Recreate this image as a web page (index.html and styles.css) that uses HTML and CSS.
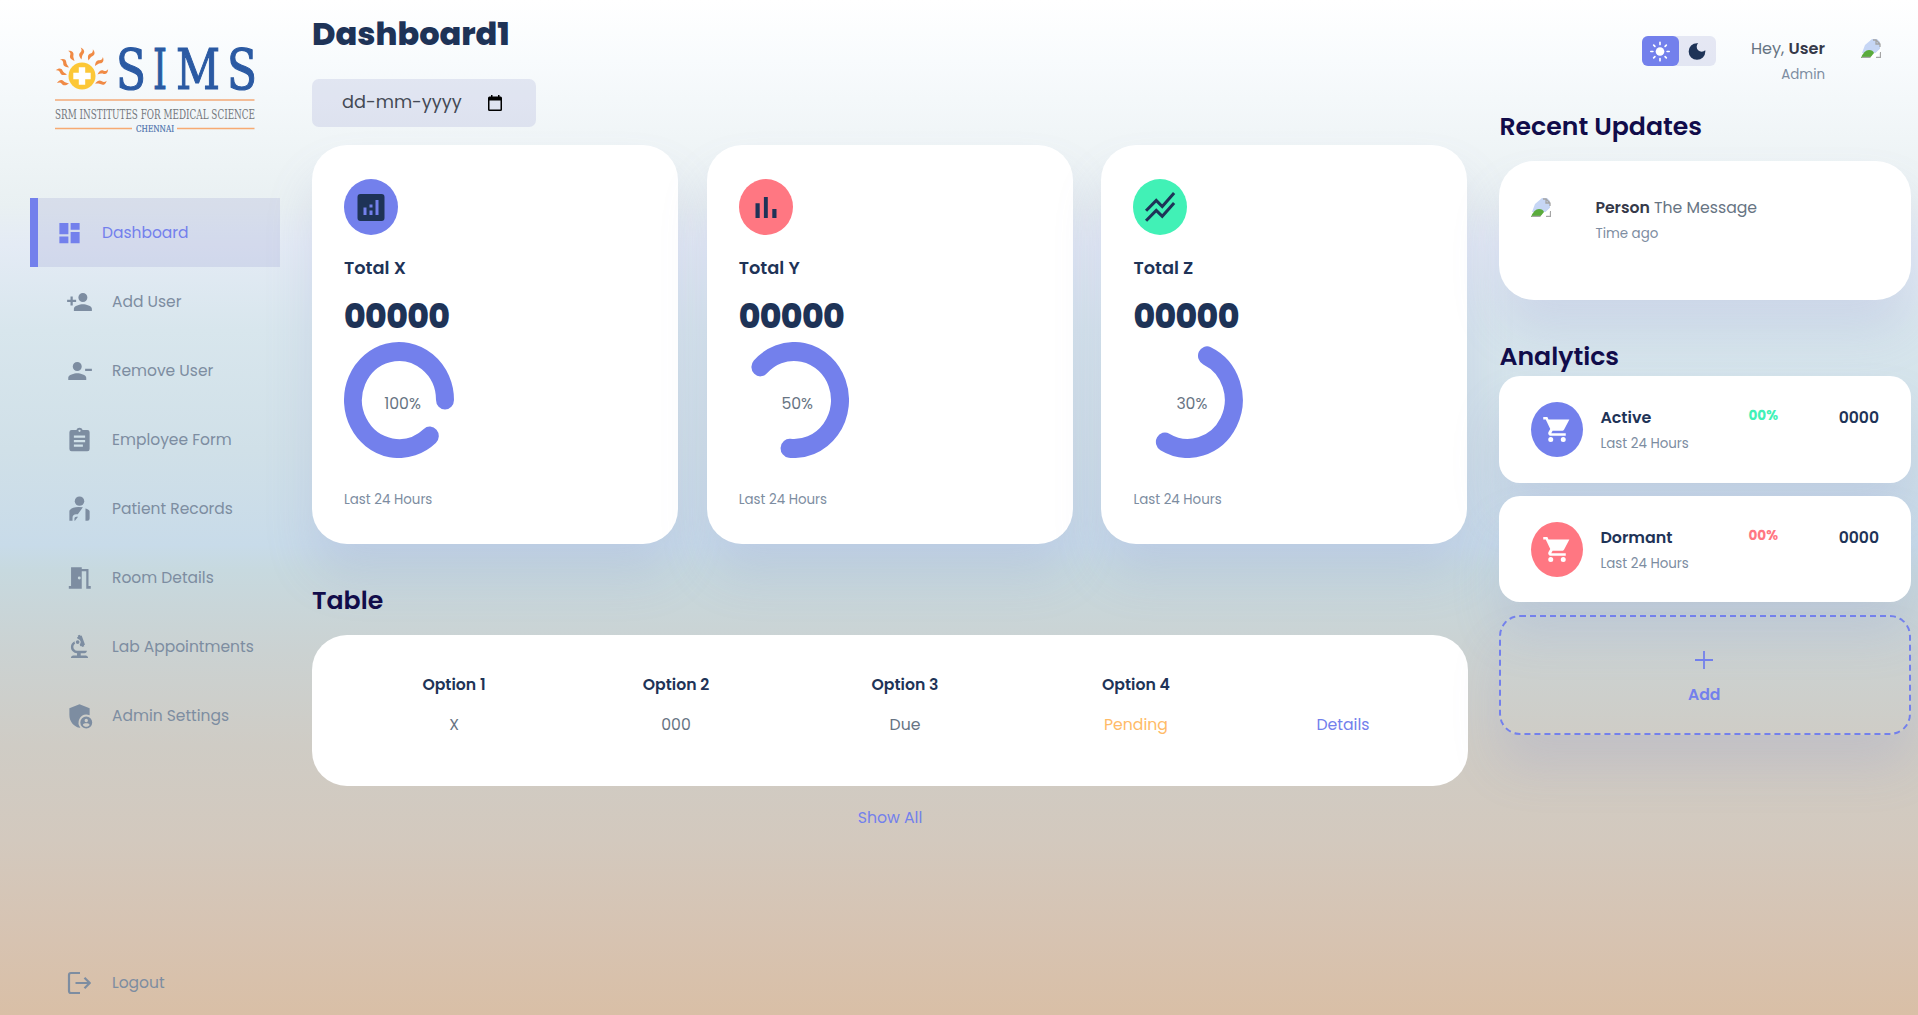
FILE: index.html
```html
<!DOCTYPE html>
<html lang="en">
<head>
<meta charset="utf-8">
<title>Dashboard</title>
<link rel="stylesheet" href="styles.css">
</head>
<body>
<div class="container">
  <aside>
    <svg class="logo" viewBox="0 0 200 90" role="img" aria-label="SIMS">
      <defs><path id="ray" d="M0 0C-3-3.500-2.800-5.500-1-7.200C.4-8.600.4-10-.8-12C3-10.200 3.400-7.500 1.900-5.800C.4-4.200.6-2.500 0 0Z"/></defs>
      <g fill="#f08a45">
        <use href="#ray" transform="translate(26.500 13.500)"/>
        <use href="#ray" transform="translate(19.500 15) rotate(-28)"/>
        <use href="#ray" transform="translate(14 21.500) rotate(-45)"/>
        <use href="#ray" transform="translate(12 28.500) rotate(-66)"/>
        <use href="#ray" transform="translate(14 37.500) rotate(-84)"/>
        <use href="#ray" transform="translate(33.500 14.500) rotate(25)"/>
        <use href="#ray" transform="translate(40 20) rotate(45)"/>
        <use href="#ray" transform="translate(42.500 28.500) rotate(66)"/>
        <use href="#ray" transform="translate(40 37.500) rotate(80)"/>
      </g>
      <circle cx="27" cy="30" r="13.500" fill="#fcc737"/>
      <path d="M23.800 21.300h6.400v5.500h5.500v6.400h-5.500v5.500h-6.400v-5.500h-5.500v-6.400h5.500z" fill="#fff"/>
      <g class="logo-name">
        <text x="61" y="43" textLength="30" lengthAdjust="spacingAndGlyphs">S</text>
        <text x="98" y="43" textLength="14" lengthAdjust="spacingAndGlyphs">I</text>
        <text x="121" y="43" textLength="44" lengthAdjust="spacingAndGlyphs">M</text>
        <text x="172" y="43" textLength="30" lengthAdjust="spacingAndGlyphs">S</text>
      </g>
      <path d="M0 54H199.500" stroke="#f3bd98" stroke-width="2"/>
      <text class="logo-line" x="0" y="73" textLength="200" lengthAdjust="spacingAndGlyphs">SRM INSTITUTES FOR MEDICAL SCIENCE</text>
      <path d="M0 82.500H77M122 82.500H199.500" stroke="#f7aa72" stroke-width="1.600"/>
      <text class="logo-city" x="81" y="86" textLength="38" lengthAdjust="spacingAndGlyphs">CHENNAI</text>
    </svg>
    <nav>
      <a class="active"><svg viewBox="0 0 24 24"><path d="M3 13h8V3H3zm0 8h8v-6H3zm10 0h8V11h-8zm0-18v6h8V3z"/></svg><span>Dashboard</span></a>
      <a><svg viewBox="0 0 24 24"><path d="M15 12a4 4 0 1 0 0-8 4 4 0 0 0 0 8zm-9-2V7H4v3H1v2h3v3h2v-3h3v-2zm9 4c-2.670 0-8 1.340-8 4v2h16v-2c0-2.660-5.330-4-8-4z"/></svg><span>Add User</span></a>
      <a><svg viewBox="0 0 24 24"><path d="M10 12a4 4 0 1 0 0-8 4 4 0 0 0 0 8zm7-2v2h6v-2zM2 18v2h16v-2c0-2.660-5.330-4-8-4s-8 1.340-8 4z"/></svg><span>Remove User</span></a>
      <a><svg viewBox="0 0 24 24"><path fill-rule="evenodd" d="M19 3h-4.200a3 3 0 0 0-5.600 0H5a2 2 0 0 0-2 2v15a2 2 0 0 0 2 2h14a2 2 0 0 0 2-2V5a2 2 0 0 0-2-2zm-7-.2a1 1 0 1 1 0 2 1 1 0 0 1 0-2zM15 18H7v-2h8zm2-4H7v-2h10zm0-4H7V8h10z"/></svg><span>Employee Form</span></a>
      <a><svg viewBox="0 0 24 24"><circle cx="12" cy="5" r="4.200"/><path d="M3 22.500v-8.500c0-2 4-3.700 8-3.700l4 .2-4.500 6.200H9c-2 0-3.200 1.300-3.200 3v2.800zM7.500 22.500v-2c0-1 .7-1.700 1.700-1.700h1.500L8 22.500zM17.300 11.500c2 .5 3.700 1.500 3.700 2.500v6.500a2 2 0 0 1-2 2h-1.700z"/></svg><span>Patient Records</span></a>
      <a><svg viewBox="0 0 24 24"><path fill-rule="evenodd" d="M14 2.500v19H2.500v-2.300H4.500V2.500zm-3.500 9.500a1.300 1.300 0 1 0 2.600 0 1.300 1.300 0 0 0-2.600 0zM14 4h6v15.200h2v2.300h-4V6h-4z"/></svg><span>Room Details</span></a>
      <a><svg viewBox="1 1 22 22"><path d="M7 19c-1.100 0-2 .9-2 2h14c0-1.100-.9-2-2-2h-4v-2h3c1.100 0 2-.9 2-2h-8c-1.660 0-3-1.340-3-3 0-1.090.59-2.040 1.460-2.560C8.170 9.030 8 8.540 8 8c0-.21.04-.42.09-.62C6.280 8.130 5 9.920 5 12c0 2.760 2.240 5 5 5v2z"/><path d="M10.560 5.510C11.910 5.540 13 6.640 13 8c0 .75-.33 1.410-.85 1.870l.59 1.620.94-.34.34.94 1.880-.68-.34-.94.94-.34-2.740-7.520-.94.34-.34-.94-1.880.68.34.94-.94.350z"/><circle cx="10.500" cy="8" r="1.500"/></svg><span>Lab Appointments</span></a>
      <a><svg viewBox="0 0 24 24"><path fill-rule="evenodd" d="M12 1.500 3 5v6c0 5.500 3.500 10 9 11.500l.8-.3A7 7 0 0 1 18 10.700c1 0 2 .2 3 .6V5zM18 12.500a5.300 5.300 0 1 0 0 10.600 5.300 5.300 0 0 0 0-10.600zm0 2a1.500 1.500 0 1 1 0 3 1.500 1.500 0 0 1 0-3zm0 7c-1.300 0-2.400-.6-3-1.600.2-1 2-1.400 3-1.400s2.800.4 3 1.400c-.6 1-1.700 1.600-3 1.600z"/></svg><span>Admin Settings</span></a>
      <a class="logout"><svg viewBox="0 0 24 24"><g fill="none" stroke="currentColor" stroke-width="2.200"><path d="M13 2H4a2 2 0 0 0-2 2v16a2 2 0 0 0 2 2h9M8.500 12H22M17.500 6.800 22.700 12l-5.200 5.200"/></g></svg><span>Logout</span></a>
    </nav>
  </aside>

  <main>
    <h1>Dashboard1</h1>
    <div class="date"><span>dd-mm-yyyy</span>
      <svg viewBox="0 0 14 16"><path fill-rule="evenodd" d="M3 0v1.500H1.500A1.500 1.500 0 0 0 0 3v11.500A1.500 1.500 0 0 0 1.500 16h11a1.500 1.500 0 0 0 1.500-1.500V3a1.500 1.500 0 0 0-1.500-1.500H11.500V0H10v1.500H4.500V0zM1.500 5.500h11v9h-11z"/></svg>
    </div>
    <div class="insights">
      <section class="card">
        <i class="badge primary"><svg viewBox="0 0 24 24"><path fill-rule="evenodd" d="M19 3H5a2 2 0 0 0-2 2v14a2 2 0 0 0 2 2h14a2 2 0 0 0 2-2V5a2 2 0 0 0-2-2zM9 17H7v-5h2zm4 0h-2v-3h2zm0-5h-2v-2h2zm4 5h-2V7h2z"/></svg></i>
        <h3>Total X</h3>
        <div class="total">00000</div>
        <div class="progress"><svg viewBox="0 0 110 110" preserveAspectRatio="none"><path d="M85.800 89.200A46 46 0 1 1 101 55"/></svg><p>100%</p></div>
        <small>Last 24 Hours</small>
      </section>
      <section class="card">
        <i class="badge danger"><svg viewBox="0 0 24 24"><path d="M5 9.200h2.800V19H5zM10.600 5h2.600v14h-2.600zM16.200 13H19v6h-2.800z"/></svg></i>
        <h3>Total Y</h3>
        <div class="total">00000</div>
        <div class="progress"><svg viewBox="0 0 110 110" preserveAspectRatio="none"><path d="M21.400 23.600A46 46 0 1 1 50.600 100.800"/></svg><p>50%</p></div>
        <small>Last 24 Hours</small>
      </section>
      <section class="card">
        <i class="badge success"><svg viewBox="0 0 24 24"><g fill="none" stroke="currentColor" stroke-width="2"><path d="m2.700 14.200 6.800-6.900 4 4 7.900-8.900M2.700 20.800l6.800-6.900 4 4 7.900-8.900"/></g></svg></i>
        <h3>Total Z</h3>
        <div class="total">00000</div>
        <div class="progress"><svg viewBox="0 0 110 110" preserveAspectRatio="none"><path d="M74 13.100A46 46 0 1 1 31.900 94.800"/></svg><p>30%</p></div>
        <small>Last 24 Hours</small>
      </section>
    </div>
    <h2>Table</h2>
    <div class="table">
      <b>Option 1</b><b>Option 2</b><b>Option 3</b><b>Option 4</b><b></b>
      <span>X</span><span>000</span><span>Due</span><span class="warning">Pending</span><span class="link">Details</span>
    </div>
    <a class="show-all">Show All</a>
  </main>

  <div class="right">
    <div class="top">
      <div class="toggle">
        <span class="on"><svg viewBox="0 0 24 24"><circle cx="12" cy="12" r="5.200"/><g stroke="currentColor" stroke-width="2" stroke-linecap="round"><path d="M12 1v2.500M12 20.500V23M1 12h2.500M20.500 12H23M4.400 4.400l1.500 1.500M18.100 18.100l1.500 1.500M4.400 19.600l1.500-1.500M18.100 5.900l1.500-1.500"/></g></svg></span>
        <span><svg viewBox="0 0 24 24"><path d="M12 2a10 10 0 1 0 10 10c0-.5 0-.9-.1-1.400A6 6 0 1 1 13.400 2.100 9 9 0 0 0 12 2z"/></svg></span>
      </div>
      <div class="info"><p>Hey, <b>User</b></p><small>Admin</small></div>
      <svg class="broken" viewBox="0 0 20 20"><path d="M4 7l7-6h5l3 3v7l-4 4H1z" fill="#c6d6f5"/><path d="M0 20q3-8 8-8 4 0 5 3l-4 5z" fill="#5aab3c"/><path d="M12 2h3l4 4v3M15 2v4h4M1 19.500h9M15 19.500h4.500V14" fill="none" stroke="#a5a5a5" stroke-width="1.300"/><path d="M9 20 20 10v3l-6 7z" fill="#fff"/></svg>
    </div>
    <h2>Recent Updates</h2>
    <div class="updates">
      <svg class="broken" viewBox="0 0 20 20"><path d="M4 7l7-6h5l3 3v7l-4 4H1z" fill="#c6d6f5"/><path d="M0 20q3-8 8-8 4 0 5 3l-4 5z" fill="#5aab3c"/><path d="M12 2h3l4 4v3M15 2v4h4M1 19.500h9M15 19.500h4.500V14" fill="none" stroke="#a5a5a5" stroke-width="1.300"/><path d="M9 20 20 10v3l-6 7z" fill="#fff"/></svg>
      <div><p><b>Person</b> The Message</p><small>Time ago</small></div>
    </div>
    <h2 class="analytics">Analytics</h2>
    <div class="item">
      <i class="badge primary"><svg viewBox="0 0 24 24"><path d="M7 18a2 2 0 1 0 0 4 2 2 0 0 0 0-4zM1 2v2h2l3.600 7.600L5.200 14c-.7 1.300.3 3 1.800 3h12v-2H7.400l1.100-2h7.500c.7 0 1.400-.4 1.700-1L21.900 4H5.200l-.9-2zm16 16a2 2 0 1 0 0 4 2 2 0 0 0 0-4z"/></svg></i>
      <div class="name"><h3>Active</h3><small>Last 24 Hours</small></div>
      <h5 class="up">00%</h5><h3 class="count">0000</h3>
    </div>
    <div class="item">
      <i class="badge danger"><svg viewBox="0 0 24 24"><path d="M7 18a2 2 0 1 0 0 4 2 2 0 0 0 0-4zM1 2v2h2l3.600 7.600L5.200 14c-.7 1.300.3 3 1.800 3h12v-2H7.400l1.100-2h7.500c.7 0 1.400-.4 1.700-1L21.900 4H5.200l-.9-2zm16 16a2 2 0 1 0 0 4 2 2 0 0 0 0-4z"/></svg></i>
      <div class="name"><h3>Dormant</h3><small>Last 24 Hours</small></div>
      <h5 class="down">00%</h5><h3 class="count">0000</h3>
    </div>
    <div class="add"><svg viewBox="0 0 20 20"><path d="M10 0v20M0 10h20" stroke="currentColor" stroke-width="2"/></svg><b>Add</b></div>
  </div>
</div>
</body>
</html>
```
FILE: styles.css
```css
* { margin: 0; padding: 0; box-sizing: border-box; }

:root {
  --primary: #7380ec;
  --danger: #ff7782;
  --success: #41f1b6;
  --warning: #ffbb67;
  --dark: #1e3357;
  --muted: #7d8da1;
  --text: #677483;
  --shadow: 0 32px 48px rgba(132, 139, 200, 0.18);
}

body {
  width: 100%;
  height: 1015px;
  overflow: hidden;
  font-family: Poppins, Inter, "Liberation Sans", sans-serif;
  font-size: 15.700px;
  line-height: 20px;
  color: var(--text);
  background: linear-gradient(#fff 0, #f8fbfd 60px, #e9f0f2 205px, #e4ebf5 245px, #d8e6ed 330px, #d0e0e8 450px, #c8dbe9 545px, #c7d9df 570px, #cbd2d2 650px, #cfccc5 745px, #d3c9be 840px, #d7c3b1 940px, #d9bfa6 1015px);
}

svg { fill: currentColor; display: block; }
i { font-style: normal; }

.container {
  display: grid;
  grid-template-columns: 250px 1156px 411px;
  column-gap: 32px;
  padding-left: 30px;
  height: 1015px;
}

/* Sidebar */
aside { display: flex; flex-direction: column; }
.logo { width: 200px; height: 90px; margin: 46px 0 62px 25px; overflow: visible; }
.logo-name { font: 56px "DejaVu Serif", serif; fill: #2b5aa3; stroke: #2b5aa3; stroke-width: 1.200; }
.logo-line { font: 12px "DejaVu Serif", serif; fill: #74777c; }
.logo-city { font: 9px "DejaVu Serif", serif; fill: #4a70ab; stroke: #4a70ab; stroke-width: .2; }
nav { display: flex; flex-direction: column; flex: 1; }
nav a { display: flex; align-items: center; gap: 19px; height: 69px; padding-left: 36px; font-size: 15.500px; color: var(--muted); }
nav a span { padding-top: 1px; }
nav a svg { width: 27px; height: 28px; }
nav a.active { padding-left: 18px; color: var(--primary); background: rgba(132, 139, 200, 0.18); border-left: 8px solid var(--primary); }
nav a.logout { margin-top: auto; margin-bottom: -2px; }
nav a.logout svg { width: 24px; height: 24px; margin: 0 2px 0 1px; }

/* Main column */
main { display: flex; flex-direction: column; }
h1 { font-size: 32px; font-weight: 800; line-height: 40px; color: var(--dark); margin-top: 14px; }
h2 { font-size: 25.200px; font-weight: 600; line-height: 30px; color: #110c4a; white-space: nowrap; }
h3 { font-size: 15.900px; font-weight: 600; color: var(--dark); }
small { font-size: 13.400px; line-height: 18px; color: var(--muted); display: block; }
.date { display: flex; align-items: center; justify-content: space-between; width: 224px; height: 48px; margin-top: 25px; padding: 0 34px 2px 30px; border-radius: 7px; background: rgba(132, 139, 200, 0.18); font-size: 17.700px; color: #444a55; }
.date svg { width: 14px; height: 16px; color: #000; margin-top: 2px; }
.insights { display: grid; grid-template-columns: repeat(3, 366px); column-gap: 28.700px; margin-top: 18px; }
.card { height: 399px; padding: 34px 32px; border-radius: 35px; background: #fff; box-shadow: var(--shadow); }
.badge { display: flex; align-items: center; justify-content: center; width: 54px; height: 56px; border-radius: 50%; color: var(--dark); }
.badge svg { width: 36px; height: 37px; }
.primary { background: var(--primary); }
.danger { background: var(--danger); }
.success { background: var(--success); }
.card h3 { margin-top: 23px; font-size: 17.800px; }
.total { font-size: 33px; font-weight: 800; line-height: 40px; letter-spacing: -.6px; color: var(--dark); margin-top: 19px; }
.progress { display: grid; width: 110px; height: 116px; margin-top: 5px; }
.progress svg, .progress p { grid-area: 1 / 1; }
.progress svg { width: 110px; height: 116px; fill: none; stroke: var(--primary); stroke-width: 18; stroke-linecap: round; }
.progress p { align-self: center; justify-self: center; padding: 8px 0 0 7px; font-size: 15.700px; white-space: nowrap; }
.card small { margin-top: 33px; }
main h2 { margin-top: 42px; }
.table { display: grid; grid-template-columns: 218px 226px 232px 230px 184px; grid-auto-rows: 40px; align-items: center; justify-items: center; height: 151px; margin-top: 19px; padding: 30px 0 0 33px; border-radius: 35px; background: #fff; }
.table b { font-weight: 600; color: var(--dark); }
.table .warning { color: var(--warning); }
.table .link { color: var(--primary); }
.show-all { align-self: center; margin-top: 22px; color: var(--primary); }

/* Right column */
.right { display: flex; flex-direction: column; margin-left: -.6px; }
.top { display: flex; align-items: flex-start; justify-content: flex-end; padding-right: 30px; margin-top: 36px; height: 76px; }
.toggle { display: flex; width: 74px; height: 30px; border-radius: 6px; background: rgba(132, 139, 200, 0.18); color: var(--dark); }
.toggle span { flex: 1; display: flex; align-items: center; justify-content: center; }
.toggle .on { color: #fff; background: var(--primary); border-radius: 6px; }
.toggle svg { width: 20px; height: 21px; }
.info { margin: 3px 36px 0 35px; text-align: right; white-space: nowrap; }
.info p { font-size: 16.100px; }
.info small { margin-top: 7px; }
p b { font-weight: 600; color: #363949; }
.broken { width: 20px; height: 20px; margin-top: 2px; }
.updates { display: flex; height: 139px; margin-top: 19px; padding: 34px 32px; gap: 44px; border-radius: 35px; background: #fff; box-shadow: var(--shadow); }
.updates div { margin-top: 3px; white-space: nowrap; }
.updates small { margin-top: 7px; }
.analytics { margin: 42px 0 4px; }
.item { display: grid; grid-template-columns: 52px 165px 30px 1fr; height: 106.500px; margin-bottom: 13px; padding: 26px 32px; border-radius: 21px; background: #fff; box-shadow: var(--shadow); }
.item .badge { width: 52px; height: 55px; color: #fff; }
.item .badge svg { width: 30px; height: 31px; }
.item .name { padding: 6px 0 0 17px; }
.item .name small { margin-top: 7px; }
h5 { font-size: 13.600px; line-height: 18px; font-weight: 700; padding-top: 5px; }
.up { color: var(--success); }
.down { color: var(--danger); }
.count { padding-top: 6px; text-align: right; font-size: 15.600px; }
.add { display: flex; flex-direction: column; align-items: center; height: 120px; padding: 33px 2px 0 0; border: 2px dashed var(--primary); border-radius: 21px; color: var(--primary); box-shadow: var(--shadow); }
.add svg { width: 18px; height: 20px; }
.add b { margin-top: 15px; font-weight: 600; }
```
